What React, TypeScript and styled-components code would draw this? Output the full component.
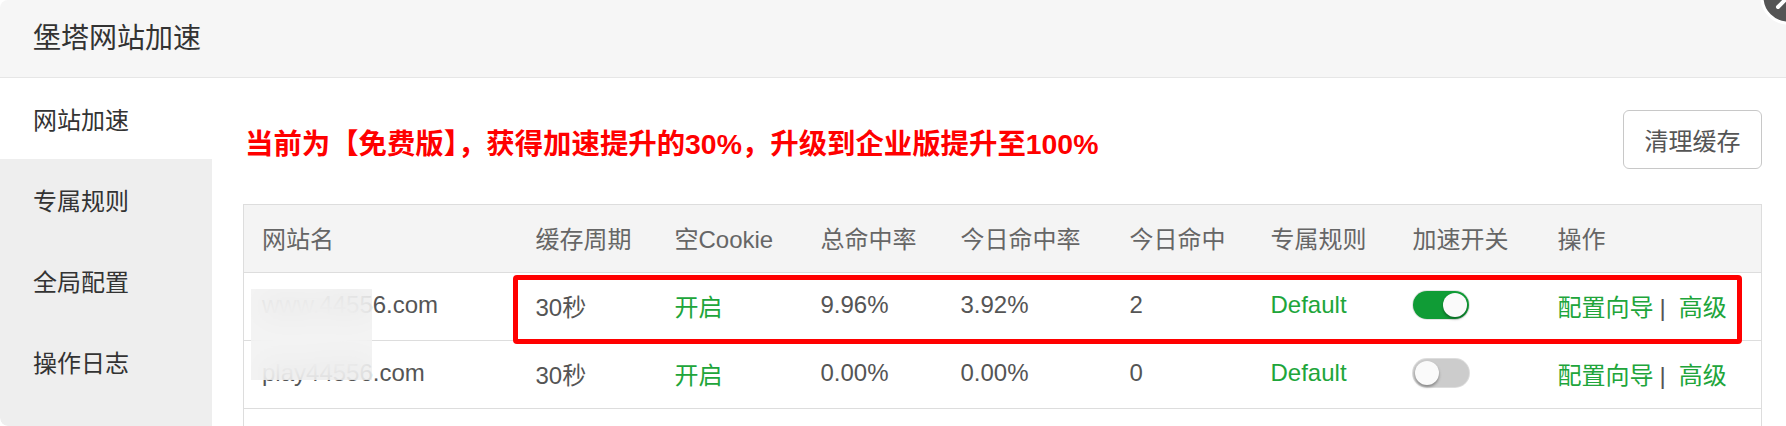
import React from "react"
import styled, { createGlobalStyle } from "styled-components"

const GlobalStyle = createGlobalStyle`
  html, body {
    margin: 0;
    padding: 0;
    background: #fff;
    overflow: hidden;
  }
  body {
    font-family: "Liberation Sans", "Noto Sans CJK SC", sans-serif;
  }
`

const Dialog = styled.div`
  position: relative;
  width: 1786px;
  height: 426px;
  background: #fff;
  border-radius: 8px 0 0 8px;
  overflow: hidden;
`
const Header = styled.div`
  height: 77px;
  line-height: 77px;
  padding-left: 33px;
  background: #f6f6f6;
  border-bottom: 1px solid #e6e6e6;
  font-size: 28px;
  color: #333;
`
const CloseBtn = styled.div`
  position: absolute;
  top: -31px;
  right: -30px;
  width: 56px;
  height: 56px;
`
const Body = styled.div`
  display: flex;
  height: 348px;
`
const Sidebar = styled.div`
  width: 212px;
  flex-shrink: 0;
  background: #eee;
  border-bottom-left-radius: 8px;
`
const SideItem = styled.div<{ $active?: boolean }>`
  height: 81px;
  display: flex;
  align-items: center;
  padding-left: 33px;
  font-size: 24px;
  color: #333;
  background: ${(p) => (p.$active ? "#fff" : "transparent")};
`
const Main = styled.div`
  flex: 1;
  padding: 32px 25px 0 31px;
`
const Toolbar = styled.div`
  display: flex;
  justify-content: space-between;
  align-items: center;
  height: 59px;
`
const Notice = styled.div`
  color: #f00;
  font-weight: bold;
  font-size: 28.4px;
  padding-left: 2px;
  margin-top: 4px;
`
const ClearButton = styled.button`
  width: 139px;
  height: 59px;
  background: #fff;
  border: 1.5px solid #c8c8c8;
  border-radius: 6px;
  font-family: inherit;
  font-size: 24px;
  color: #555;
  cursor: pointer;
`
const TableWrap = styled.div`
  position: relative;
  margin-top: 35px;
`
const Table = styled.table`
  width: 100%;
  table-layout: fixed;
  border-collapse: collapse;
  border: 1.5px solid #ddd;
  font-size: 24px;
`
const Th = styled.th`
  height: 64px;
  padding: 0 0 3px 18px;
  text-align: left;
  font-weight: normal;
  color: #666;
  background: #f4f4f4;
  border-bottom: 1.5px solid #ddd;
`
const Td = styled.td`
  height: 64px;
  padding: 0 0 3px 18px;
  color: #555;
  border-bottom: 1.5px solid #ddd;
  white-space: nowrap;
`
const Green = styled.span`
  color: #20a53a;
`
const Sep = styled.span`
  color: #555;
  margin: 0 13px 0 6px;
`
const Track = styled.div<{ $on?: boolean }>`
  position: relative;
  width: 56px;
  height: 28px;
  border-radius: 14px;
  background: ${(p) => (p.$on ? "#109c36" : "#ccc")};
  box-shadow: 0 0 0 1px ${(p) => (p.$on ? "#e4e4e4" : "#ddd")};
`
const Knob = styled.div<{ $on?: boolean }>`
  position: absolute;
  top: 2px;
  left: ${(p) => (p.$on ? "30px" : "2px")};
  width: 24px;
  height: 24px;
  border-radius: 50%;
  background: #fafafa;
  box-shadow: 0 2px 3px rgba(0, 0, 0, 0.35);
`
const Highlight = styled.div`
  position: absolute;
  left: 270px;
  top: 71px;
  width: 1229px;
  height: 69px;
  box-sizing: border-box;
  border: 5px solid #f00;
  border-radius: 4px;
  pointer-events: none;
`
const Mask = styled.div`
  position: absolute;
  left: 8px;
  top: 85px;
  width: 121px;
  height: 91px;
  backdrop-filter: blur(14px);
  background: rgba(240, 240, 240, 0.82);
`

const cols = [274, 139, 146, 140, 169, 141, 142, 145, 222]
const heads = ["网站名", "缓存周期", "空Cookie", "总命中率", "今日命中率", "今日命中", "专属规则", "加速开关", "操作"]

const rows = [
  { name: "www.44556.com", cycle: "30秒", total: "9.96%", today: "3.92%", hits: "2", on: true },
  { name: "play44556.com", cycle: "30秒", total: "0.00%", today: "0.00%", hits: "0", on: false },
]

function Switch({ on }: { on: boolean }) {
  return (
    <Track $on={on}>
      <Knob $on={on} />
    </Track>
  )
}

export default function App() {
  return (
    <>
      <GlobalStyle />
      <Dialog>
        <Header>堡塔网站加速</Header>
        <CloseBtn>
          <svg width="56" height="56" viewBox="0 0 56 56">
            <circle cx="28" cy="28" r="26" fill="#555" stroke="#fff" strokeWidth="3" />
            <path d="M18 18 L38 38 M38 18 L18 38" stroke="#fff" strokeWidth="4" strokeLinecap="round" />
          </svg>
        </CloseBtn>
        <Body>
          <Sidebar>
            <SideItem $active>网站加速</SideItem>
            <SideItem>专属规则</SideItem>
            <SideItem>全局配置</SideItem>
            <SideItem>操作日志</SideItem>
          </Sidebar>
          <Main>
            <Toolbar>
              <Notice>当前为【免费版】，获得加速提升的30%，升级到企业版提升至100%</Notice>
              <ClearButton>清理缓存</ClearButton>
            </Toolbar>
            <TableWrap>
              <Table>
                <colgroup>
                  {cols.map((w, i) => (
                    <col key={i} style={{ width: w }} />
                  ))}
                </colgroup>
                <thead>
                  <tr>
                    {heads.map((h) => (
                      <Th key={h}>{h}</Th>
                    ))}
                  </tr>
                </thead>
                <tbody>
                  {rows.map((r) => (
                    <tr key={r.name}>
                      <Td>{r.name}</Td>
                      <Td>{r.cycle}</Td>
                      <Td>
                        <Green>开启</Green>
                      </Td>
                      <Td>{r.total}</Td>
                      <Td>{r.today}</Td>
                      <Td>{r.hits}</Td>
                      <Td>
                        <Green>Default</Green>
                      </Td>
                      <Td>
                        <Switch on={r.on} />
                      </Td>
                      <Td>
                        <Green>配置向导</Green>
                        <Sep>|</Sep>
                        <Green>高级</Green>
                      </Td>
                    </tr>
                  ))}
                  <tr>
                    <Td colSpan={9} />
                  </tr>
                </tbody>
              </Table>
              <Highlight />
              <Mask />
            </TableWrap>
          </Main>
        </Body>
      </Dialog>
    </>
  )
}
